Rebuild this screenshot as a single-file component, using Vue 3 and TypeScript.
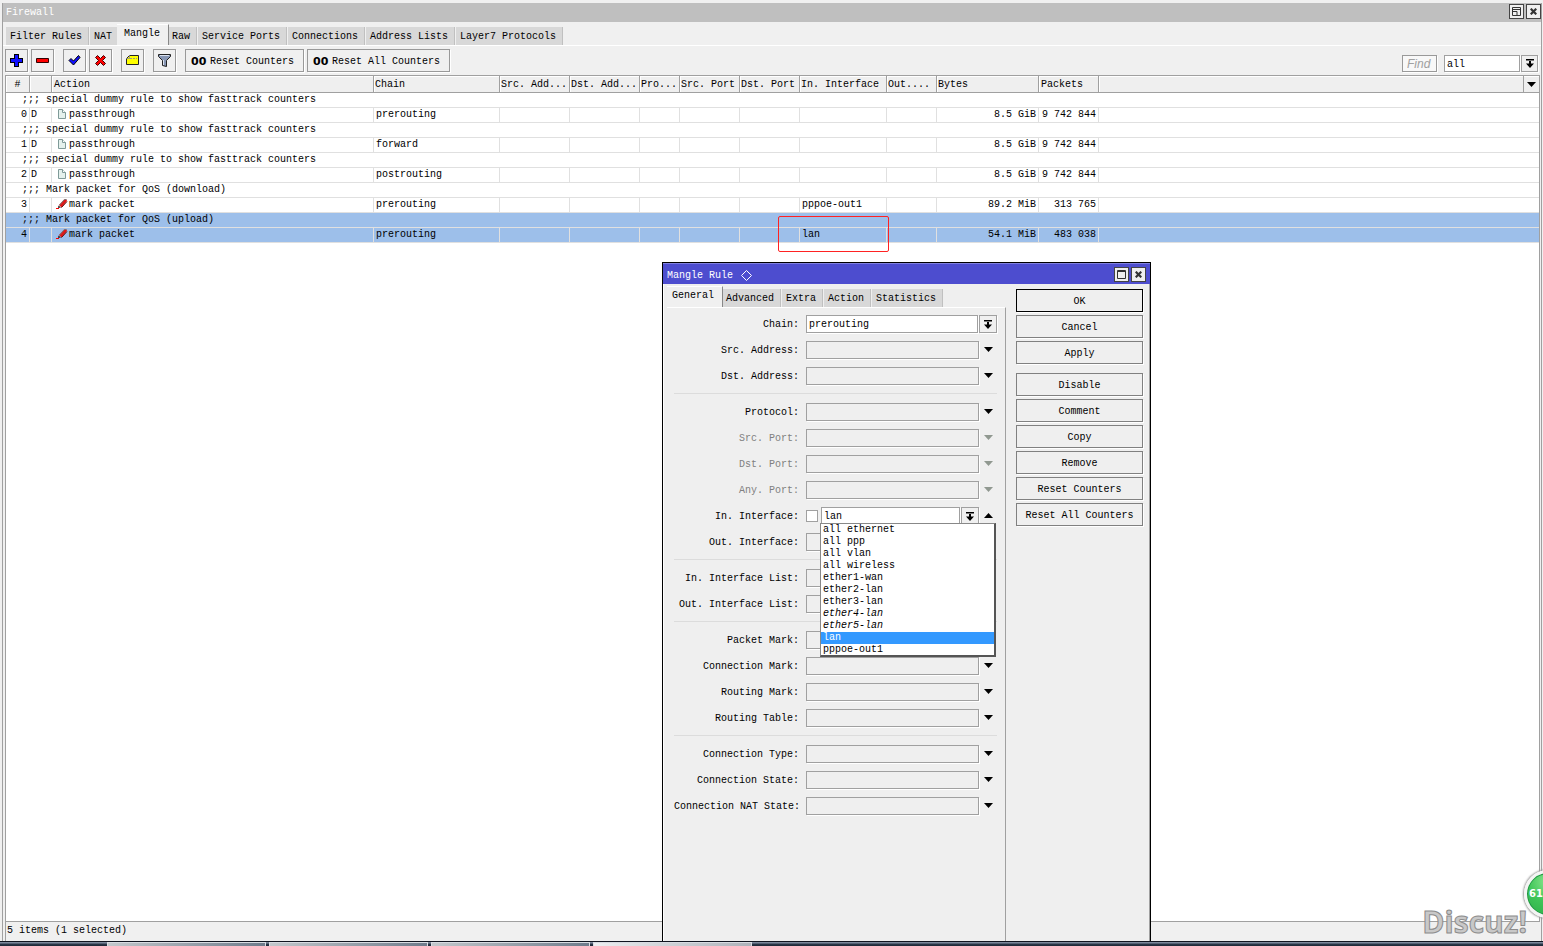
<script setup lang="ts">
import { ref } from 'vue'

interface Rule {
  id: number
  comment: string
  flag: string
  kind: 'pass' | 'mark'
  action: string
  chain: string
  inInterface: string
  bytes: string
  packets: string
}

interface Field {
  label: string
  id: string
  disabled?: boolean
}

const tabs = ['Filter Rules', 'NAT', 'Mangle', 'Raw', 'Service Ports', 'Connections', 'Address Lists', 'Layer7 Protocols']
const activeTab = ref('Mangle')

const dialogTabs = ['General', 'Advanced', 'Extra', 'Action', 'Statistics']
const activeDialogTab = ref('General')

const dummy = 'special dummy rule to show fasttrack counters'
const rules: Rule[] = [
  { id: 0, comment: dummy, flag: 'D', kind: 'pass', action: 'passthrough', chain: 'prerouting', inInterface: '', bytes: '8.5 GiB', packets: '9 742 844' },
  { id: 1, comment: dummy, flag: 'D', kind: 'pass', action: 'passthrough', chain: 'forward', inInterface: '', bytes: '8.5 GiB', packets: '9 742 844' },
  { id: 2, comment: dummy, flag: 'D', kind: 'pass', action: 'passthrough', chain: 'postrouting', inInterface: '', bytes: '8.5 GiB', packets: '9 742 844' },
  { id: 3, comment: 'Mark packet for QoS (download)', flag: '', kind: 'mark', action: 'mark packet', chain: 'prerouting', inInterface: 'pppoe-out1', bytes: '89.2 MiB', packets: '313 765' },
  { id: 4, comment: 'Mark packet for QoS (upload)', flag: '', kind: 'mark', action: 'mark packet', chain: 'prerouting', inInterface: 'lan', bytes: '54.1 MiB', packets: '483 038' },
]
const selected = ref(4)

const columns = [
  { key: 'num', title: '#' },
  { key: 'flag', title: '' },
  { key: 'action', title: 'Action' },
  { key: 'chain', title: 'Chain' },
  { key: 'src', title: 'Src. Add...' },
  { key: 'dst', title: 'Dst. Add...' },
  { key: 'proto', title: 'Pro...' },
  { key: 'sport', title: 'Src. Port' },
  { key: 'dport', title: 'Dst. Port' },
  { key: 'in', title: 'In. Interface' },
  { key: 'out', title: 'Out....' },
  { key: 'bytes', title: 'Bytes' },
  { key: 'packets', title: 'Packets' },
  { key: 'rest', title: '' },
]

const addressFields: Field[] = [
  { label: 'Src. Address', id: 'src-address' },
  { label: 'Dst. Address', id: 'dst-address' },
]
const protocolFields: Field[] = [
  { label: 'Protocol', id: 'protocol' },
  { label: 'Src. Port', id: 'src-port', disabled: true },
  { label: 'Dst. Port', id: 'dst-port', disabled: true },
  { label: 'Any. Port', id: 'any-port', disabled: true },
]
const outField: Field[] = [{ label: 'Out. Interface', id: 'out-interface' }]
const laterGroups: Field[][] = [
  [
    { label: 'In. Interface List', id: 'in-list' },
    { label: 'Out. Interface List', id: 'out-list' },
  ],
  [
    { label: 'Packet Mark', id: 'packet-mark' },
    { label: 'Connection Mark', id: 'connection-mark' },
    { label: 'Routing Mark', id: 'routing-mark' },
    { label: 'Routing Table', id: 'routing-table' },
  ],
  [
    { label: 'Connection Type', id: 'connection-type' },
    { label: 'Connection State', id: 'connection-state' },
    { label: 'Connection NAT State', id: 'connection-nat' },
  ],
]

const interfaces = [
  { name: 'all ethernet' },
  { name: 'all ppp' },
  { name: 'all vlan' },
  { name: 'all wireless' },
  { name: 'ether1-wan' },
  { name: 'ether2-lan' },
  { name: 'ether3-lan' },
  { name: 'ether4-lan', inactive: true },
  { name: 'ether5-lan', inactive: true },
  { name: 'lan' },
  { name: 'pppoe-out1' },
]
const inInterface = ref('lan')
const chain = ref('prerouting')
const filterChain = ref('all')
const find = ref('')

const mainActions = ['OK', 'Cancel', 'Apply']
const moreActions = ['Disable', 'Comment', 'Copy', 'Remove', 'Reset Counters', 'Reset All Counters']
</script>

<template>
  <div class="desktop">
    <main class="firewall">
      <header class="titlebar">
        <h1>Firewall</h1>
        <div class="window-controls">
          <button class="win-btn" aria-label="Restore">
            <svg width="9" height="9" viewBox="0 0 9 9"><path d="M.5.5h8v8h-8zM0 2.5h9M.5 4.5h4.5v4" fill="none" stroke="#333" /></svg>
          </button>
          <button class="win-btn" aria-label="Close">
            <svg width="7" height="7" viewBox="0 0 7 7"><path d="M.7.7l5.600 5.600M6.300.7L.7 6.300" stroke="#333" stroke-width="2.2" /></svg>
          </button>
        </div>
      </header>

      <nav class="tabs main-tabs" role="tablist">
        <button v-for="t in tabs" :key="t" role="tab" class="tab" :class="{ active: t === activeTab }" :aria-selected="t === activeTab" @click="activeTab = t">{{ t }}</button>
      </nav>

      <div class="toolbar">
        <div class="tool-group">
          <button class="tool" aria-label="Add">
            <svg width="13" height="13" viewBox="0 0 13 13"><path d="M4 0h5v4h4v5H9v4H4V9H0V4h4z" fill="#000" /><path d="M5 1h3v4h4v3H8v4H5V8H1V5h4z" fill="#1010ff" /></svg>
          </button>
          <button class="tool" aria-label="Remove">
            <svg width="13" height="13" viewBox="0 0 13 13"><path d="M.5 4.500h12v4H.5z" fill="#f00" stroke="#300" /></svg>
          </button>
        </div>
        <div class="tool-group">
          <button class="tool" aria-label="Enable">
            <svg width="13" height="13" viewBox="0 0 13 13"><path d="M1 6.500L3 4.500l2.500 2.500L10.500 1.500l1.500 2L5.500 11z" fill="#1010ff" stroke="#000" /></svg>
          </button>
          <button class="tool" aria-label="Disable">
            <svg width="13" height="13" viewBox="0 0 13 13"><path d="M1.500 3.500l2-2 3 3 3-3 2 2-3 3 3 3-2 2-3-3-3 3-2-2 3-3z" fill="#f00" stroke="#400" /></svg>
          </button>
        </div>
        <div class="tool-group">
          <button class="tool" aria-label="Comment">
            <svg width="15" height="13" viewBox="0 0 15 13"><path d="M4.500 1.500h9v9h-12v-6z" fill="#ff0" stroke="#222" /><path d="M5 4.500h2M8 4.500h2M11 4.500h1M4.500 1.500v3h-3" stroke="#998" fill="none" /></svg>
          </button>
        </div>
        <div class="tool-group">
          <button class="tool" aria-label="Filter">
            <svg width="13" height="14" viewBox="0 0 13 14"><path d="M.5.500h12v2l-4 4v6l-4-1v-5l-4-4z" fill="#8796b4" stroke="#222" /><path d="M2 1.500h9M5.500 6v5" stroke="#dbe2ee" /></svg>
          </button>
        </div>
        <div class="tool-group">
          <button class="tool wide"><b>00</b>Reset Counters</button>
          <button class="tool wide"><b>00</b>Reset All Counters</button>
        </div>
        <div class="filters">
          <input v-model="find" class="find" type="text" placeholder="Find" aria-label="Find" />
          <span class="combo">
            <select v-model="filterChain" class="box white chain-filter" aria-label="Chain filter">
              <option>all</option>
            </select>
            <span class="drop"><svg width="8" height="9" viewBox="0 0 8 9"><path d="M0 0h8v1.500H0zM3 2h2v2.500h3L4 9 0 4.500h3z" /></svg></span>
          </span>
        </div>
      </div>

      <section class="list">
        <div class="head-menu">
          <button aria-label="Choose columns"><svg width="9" height="5" viewBox="0 0 9 5"><path d="M0 0h9L4.500 5z" /></svg></button>
        </div>
        <table>
          <colgroup>
            <col v-for="c in columns" :key="c.key" :class="'c-' + c.key" />
          </colgroup>
          <thead>
            <tr>
              <th v-for="c in columns" :key="c.key" :class="'h-' + c.key" scope="col">{{ c.title }}</th>
            </tr>
          </thead>
          <tbody v-for="r in rules" :key="r.id" :class="{ selected: r.id === selected }" @click="selected = r.id">
            <tr>
              <td class="comment" colspan="14">;;; {{ r.comment }}</td>
            </tr>
            <tr>
              <td class="right">{{ r.id }}</td>
              <td class="flag">{{ r.flag }}</td>
              <td class="action">
                <svg v-if="r.kind === 'pass'" width="12" height="12" viewBox="0 0 12 12"><path d="M2.500 1.500h4l3 3v6h-7z" fill="#e4f0ec" stroke="#7f9a98" /><path d="M6.500 1.500v3h3" fill="#fff" stroke="#7f9a98" /></svg>
                <svg v-else width="12" height="12" viewBox="0 0 12 12"><path d="M3 7l5-5.500h2.500l.5 1.500L5.500 9.500z" fill="#e01818" /><path d="M3.500 7L8.500 1.500h2" stroke="#777" fill="none" /><path d="M5.500 9.500L11 3.500" stroke="#5a1010" /><path d="M2.500 7.500L5 9.500 2 10z" fill="#222" /><path d="M0 10.500h3" stroke="#f00" /></svg>
                <span>{{ r.action }}</span>
              </td>
              <td>{{ r.chain }}</td>
              <td></td><td></td><td></td><td></td><td></td>
              <td class="marked">{{ r.inInterface }}<i v-if="r.id === 4" class="callout"></i></td>
              <td></td>
              <td class="right">{{ r.bytes }}</td>
              <td class="right">{{ r.packets }}</td>
              <td class="rest"></td>
            </tr>
          </tbody>
        </table>
      </section>

      <footer class="status">5 items (1 selected)</footer>
    </main>

    <div class="taskbar" aria-hidden="true">
      <span class="task"></span><span class="task"></span><span class="task"></span><span class="task current"></span>
    </div>

    <section class="dialog" role="dialog" aria-labelledby="dialog-title">
      <header class="dialog-title">
        <h2 id="dialog-title">Mangle Rule <svg width="11" height="11" viewBox="0 0 11 11"><path d="M5.500.5l5 5-5 5-5-5z" fill="none" stroke="#fff" /></svg></h2>
        <div class="window-controls">
          <button class="win-btn" aria-label="Maximize">
            <svg width="9" height="9" viewBox="0 0 9 9"><path d="M.5.500h8v8h-8zM0 1.500h9" fill="none" stroke="#333" /></svg>
          </button>
          <button class="win-btn" aria-label="Close rule">
            <svg width="7" height="7" viewBox="0 0 7 7"><path d="M.7.7l5.600 5.600M6.300.7L.7 6.300" stroke="#333" stroke-width="2.2" /></svg>
          </button>
        </div>
      </header>
      <div class="dialog-body">
        <div class="form-side">
          <nav class="tabs" role="tablist">
            <button v-for="t in dialogTabs" :key="t" role="tab" class="tab" :class="{ active: t === activeDialogTab }" :aria-selected="t === activeDialogTab" @click="activeDialogTab = t">{{ t }}</button>
          </nav>
          <form class="form" @submit.prevent>
            <div class="row">
              <label for="chain">Chain:</label>
              <span class="combo">
                <select id="chain" v-model="chain" class="box white">
                  <option>prerouting</option>
                  <option>forward</option>
                  <option>postrouting</option>
                </select>
                <span class="drop"><svg width="8" height="9" viewBox="0 0 8 9"><path d="M0 0h8v1.500H0zM3 2h2v2.500h3L4 9 0 4.500h3z" /></svg></span>
              </span>
            </div>
            <div v-for="f in addressFields" :key="f.id" class="row">
              <label :for="f.id">{{ f.label }}:</label>
              <input :id="f.id" class="box" type="text" />
              <button type="button" class="expand" :aria-label="'Expand ' + f.label"><svg width="9" height="5" viewBox="0 0 9 5"><path d="M0 0h9L4.500 5z" /></svg></button>
            </div>
            <hr />
            <div v-for="f in protocolFields" :key="f.id" class="row" :class="{ off: f.disabled }">
              <label :for="f.id">{{ f.label }}:</label>
              <input :id="f.id" class="box" type="text" :disabled="f.disabled" />
              <button type="button" class="expand" :disabled="f.disabled" :aria-label="'Expand ' + f.label"><svg width="9" height="5" viewBox="0 0 9 5"><path d="M0 0h9L4.500 5z" /></svg></button>
            </div>
            <div class="row">
              <label for="in-interface">In. Interface:</label>
              <div class="picker">
                <input class="negate" type="checkbox" aria-label="Negate in. interface" />
                <span class="combo">
                  <input id="in-interface" v-model="inInterface" class="box white" type="text" role="combobox" aria-expanded="true" aria-controls="interface-list" />
                  <button type="button" class="drop" aria-label="Show interfaces"><svg width="8" height="9" viewBox="0 0 8 9"><path d="M0 0h8v1.500H0zM3 2h2v2.500h3L4 9 0 4.500h3z" /></svg></button>
                </span>
                <ul id="interface-list" class="options" role="listbox" aria-label="Interfaces">
                  <li v-for="o in interfaces" :key="o.name" role="option" :class="{ chosen: o.name === inInterface, inactive: o.inactive }" :aria-selected="o.name === inInterface" @click="inInterface = o.name">{{ o.name }}</li>
                </ul>
              </div>
              <button type="button" class="expand" aria-label="Collapse In. Interface"><svg width="9" height="5" viewBox="0 0 9 5"><path d="M0 5h9L4.500 0z" /></svg></button>
            </div>
            <div v-for="f in outField" :key="f.id" class="row">
              <label :for="f.id">{{ f.label }}:</label>
              <input :id="f.id" class="box" type="text" />
              <button type="button" class="expand" :aria-label="'Expand ' + f.label"><svg width="9" height="5" viewBox="0 0 9 5"><path d="M0 0h9L4.500 5z" /></svg></button>
            </div>
            <template v-for="(g, i) in laterGroups" :key="i">
              <hr />
              <div v-for="f in g" :key="f.id" class="row">
                <label :for="f.id">{{ f.label }}:</label>
                <input :id="f.id" class="box" type="text" />
                <button type="button" class="expand" :aria-label="'Expand ' + f.label"><svg width="9" height="5" viewBox="0 0 9 5"><path d="M0 0h9L4.500 5z" /></svg></button>
              </div>
            </template>
          </form>
        </div>
        <div class="actions">
          <div class="action-group">
            <button v-for="a in mainActions" :key="a" class="push" :class="{ primary: a === 'OK' }">{{ a }}</button>
          </div>
          <div class="action-group">
            <button v-for="a in moreActions" :key="a" class="push">{{ a }}</button>
          </div>
        </div>
      </div>
    </section>

    <div class="watermark">Discuz!</div>
    <div class="ball">61</div>
  </div>
</template>

<style>
html,
body {
  margin: 0;
  background: #f0f0f0;
}
</style>

<style scoped>
.desktop,
.desktop * {
  box-sizing: border-box;
}
.desktop {
  position: relative;
  display: flex;
  flex-direction: column;
  min-height: 100vh;
  overflow: hidden;
  background: #f0f0f0;
  color: #000;
  font: 10px/14px "Liberation Mono", monospace;
}
button,
input,
select {
  margin: 0;
  padding: 0;
  border: 0;
  border-radius: 0;
  background: none;
  color: inherit;
  font: inherit;
  appearance: none;
  outline: none;
}
svg {
  display: block;
  flex: none;
}

/* main window */
.firewall {
  flex: 1;
  display: flex;
  flex-direction: column;
  margin: 3px 1px 0 2px;
  border-left: 1px solid #a0a0a0;
  border-right: 1px solid #a0a0a0;
}
.titlebar {
  display: flex;
  justify-content: space-between;
  align-items: center;
  height: 19px;
  padding: 0 0 2px 3px;
  background: #bfbfbf;
}
h1,
h2 {
  margin: 0;
  padding-top: 3px;
  color: #fff;
  font: inherit;
}
.window-controls {
  display: flex;
  gap: 2px;
}
.win-btn {
  display: grid;
  place-items: center;
  width: 15px;
  height: 15px;
  border: 1px solid #444;
  background: #efefef;
}
.tabs {
  display: flex;
  align-items: flex-end;
  height: 23px;
}
.main-tabs {
  padding-left: 3px;
}
.tab {
  height: 18px;
  margin-right: 1px;
  padding: 2px 6px 0 4px;
  border-right: 1px solid #c0c0c0;
  background: #d8d8d8;
  white-space: nowrap;
}
.tab.active {
  position: relative;
  height: 21px;
  margin: 0 0 0 -3px;
  padding: 0 8px 2px 7px;
  border-top: 1px solid #fff;
  border-right: 1px solid #888;
  background: #f0f0f0;
}
.main-tabs .tab.active {
  margin-right: -1px;
}
.toolbar {
  display: flex;
  align-items: center;
  gap: 9px;
  height: 30px;
  padding: 0 3px 0 2px;
  border-top: 1px solid #fff;
}
.tool-group {
  display: flex;
  gap: 3px;
}
.tool {
  display: flex;
  align-items: center;
  justify-content: center;
  width: 23px;
  height: 23px;
  border: 1px solid #999;
  background: #f0f0f0;
  box-shadow: 1px 1px 0 #fff;
  white-space: nowrap;
}
.tool.wide {
  width: auto;
  padding: 2px 9px 0 5px;
}
.tool b {
  width: 19px;
  font: bold 11px/14px "DejaVu Sans", sans-serif;
  text-align: left;
}
.filters {
  display: flex;
  align-items: flex-end;
  gap: 7px;
  height: 23px;
  margin-left: auto;
}
.find {
  width: 35px;
  height: 17px;
  padding: 0 4px;
  border: 1px solid #999;
  background: #f8f8f8;
  box-shadow: 1px 1px 0 #fff;
  font: italic 12px/14px "Liberation Sans", Arial, sans-serif;
}
.find::placeholder {
  color: #a0a0a0;
  opacity: 1;
}
.combo {
  display: flex;
  gap: 1px;
}
.box {
  flex: 1;
  min-width: 0;
  height: 18px;
  padding: 0 2px;
  border: 1px solid #a0a0a0;
  background: #efefef;
  box-shadow: 1px 1px 0 #fff;
}
.box.white {
  background: #fff;
}
select.box {
  padding-top: 2px;
}
.chain-filter {
  flex: none;
  width: 76px;
}
.filters .box,
.filters .drop {
  height: 17px;
}
.drop {
  display: grid;
  flex: none;
  place-items: center;
  width: 17px;
  height: 18px;
  border: 1px solid #a0a0a0;
  background: #f0f0f0;
  box-shadow: 1px 1px 0 #fff;
}

/* rule list */
.list {
  position: relative;
  flex: 1;
  margin: 0 1px 0 2px;
  border: 1px solid #a0a0a0;
  background: #fff;
}
table {
  width: 100%;
  table-layout: fixed;
  border-collapse: separate;
  border-spacing: 0;
}
.c-num { width: 24px; }
.c-flag { width: 22px; }
.c-action { width: 322px; }
.c-chain { width: 126px; }
.c-src,
.c-dst { width: 70px; }
.c-proto { width: 40px; }
.c-sport,
.c-dport { width: 60px; }
.c-in { width: 87px; }
.c-out { width: 50px; }
.c-bytes { width: 102px; }
.c-packets { width: 60px; }
th {
  height: 17px;
  padding: 2px 1px 0;
  border-right: 1px solid #a0a0a0;
  border-bottom: 1px solid #a0a0a0;
  background: #efefef;
  box-shadow: inset 1px 1px 0 #fff;
  font-weight: normal;
  text-align: left;
  white-space: nowrap;
}
th.h-num {
  text-align: center;
}
th.h-action,
th.h-packets {
  padding-left: 2px;
}
th.h-rest {
  border-right: 0;
}
.head-menu {
  position: absolute;
  top: 0;
  right: 0;
}
.head-menu button {
  display: grid;
  place-items: center;
  width: 16px;
  height: 16px;
  border-left: 1px solid #a0a0a0;
}
td {
  position: relative;
  height: 15px;
  padding: 0 2px;
  border-right: 1px solid #e0e0e0;
  border-bottom: 1px solid #e0e0e0;
  line-height: 14px;
  white-space: nowrap;
}
td.comment {
  padding-left: 16px;
  border-right: 0;
}
td.flag {
  padding-left: 1px;
}
td.rest {
  border-right: 0;
}
td.right {
  text-align: right;
}
td.action {
  padding-left: 4px;
}
td.action svg {
  display: inline-block;
  margin-right: 1px;
  vertical-align: top;
}
.selected td {
  background: #9dbfea;
}
.callout {
  position: absolute;
  z-index: 2;
  top: -12px;
  left: -22px;
  width: 111px;
  height: 36px;
  border: 1px solid #f22;
  border-radius: 2px;
}
.status {
  height: 19px;
  margin: 0 0 0 2px;
  padding: 2px 1px;
  border-left: 1px solid #a0a0a0;
}

/* taskbar */
.taskbar {
  display: flex;
  gap: 3px;
  height: 5px;
  padding-left: 107px;
  border-top: 1px solid #10141f;
  background: linear-gradient(#7d899c 0 1px, #2c394b 2px, #1d2836);
}
.task {
  width: 159px;
  border: 1px solid #d8dce2;
  border-bottom: 0;
  background: linear-gradient(90deg, #c3c8cc, #6f7c8c);
}
.task.current {
  background: linear-gradient(90deg, #eceef0, #adb2ba);
}

/* rule dialog */
.dialog {
  position: absolute;
  z-index: 3;
  top: 262px;
  bottom: 5px;
  left: 662px;
  display: flex;
  flex-direction: column;
  width: 489px;
  border: 1px solid #000;
  border-bottom: 0;
  background: #efefef;
}
.dialog-title {
  display: flex;
  justify-content: space-between;
  align-items: center;
  height: 21px;
  padding: 0 4px;
  border-top: 1px solid #8080e0;
  background: #4d4dcf;
}
h2 {
  display: flex;
  align-items: center;
  gap: 8px;
}
.dialog-body {
  flex: 1;
  display: flex;
  padding: 0 6px 0 3px;
  border-left: 1px solid #fff;
  border-right: 1px solid #a0a0a0;
}
.form-side {
  flex: 1;
  display: flex;
  flex-direction: column;
  min-width: 0;
}
.dialog .tab.active {
  margin: 0 -1px 0 0;
  padding: 0 8px 2px 5px;
}
.form {
  flex: 1;
  padding: 3px 8px 0 7px;
  border-top: 1px solid #fff;
  border-right: 1px solid #a0a0a0;
}
.row {
  display: grid;
  grid-template-columns: 125px 173px 11px;
  column-gap: 7px;
  align-items: center;
  height: 26px;
}
.row label {
  padding-top: 2px;
  text-align: right;
  white-space: nowrap;
}
.row > .box {
  width: 173px;
}
.row > .combo {
  grid-column: 2 / 4;
  width: 191px;
}
.row .drop {
  width: 18px;
}
.row .expand {
  display: grid;
  place-items: center;
  width: 9px;
  height: 9px;
  margin: -2px 0 0 -2px;
}
.off label {
  color: #808080;
}
.off path {
  fill: #909890;
}
hr {
  height: 10px;
  margin: 0;
  border: 0;
  background: linear-gradient(#dcdcdc, #dcdcdc) 0 4px / 100% 1px no-repeat;
}
.picker {
  position: relative;
  display: flex;
  align-items: center;
  gap: 3px;
}
.picker .combo {
  flex: 1;
}
.negate {
  width: 12px;
  height: 12px;
  border: 1px solid #a0a0a0;
  background: #fff;
}
.options {
  position: absolute;
  z-index: 4;
  top: 16px;
  left: 14px;
  width: 176px;
  height: 134px;
  margin: 0;
  padding: 0;
  overflow: hidden;
  border: 1px solid #888;
  border-right: 2px solid #555;
  border-bottom: 2px solid #555;
  background: #fff;
  list-style: none;
}
.options li {
  height: 12px;
  padding-left: 2px;
  line-height: 12px;
}
.options .inactive {
  font-style: italic;
}
.options .chosen {
  background: #3399ff;
  color: #fff;
}
.actions {
  flex: none;
  display: flex;
  flex-direction: column;
  gap: 9px;
  width: 137px;
  padding: 5px 0 0 10px;
}
.action-group {
  display: flex;
  flex-direction: column;
  gap: 3px;
}
.push {
  height: 23px;
  padding-top: 2px;
  border: 1px solid #808080;
  background: #efefef;
  box-shadow: 1px 1px 0 #fff;
}
.push.primary {
  border-color: #000;
}

/* overlays */
.watermark {
  position: absolute;
  z-index: 5;
  right: 16px;
  bottom: 4px;
  color: #c8c8c8;
  font: bold 30px/40px "Open Sans", "Noto Sans", sans-serif;
  -webkit-text-stroke: 1px #8c8c8c;
}
.ball {
  position: absolute;
  z-index: 6;
  right: -29px;
  bottom: 28px;
  width: 48px;
  height: 48px;
  padding-left: 2px;
  border: 3px solid #f4f4f4;
  border-radius: 50%;
  background: radial-gradient(circle at 50% 20%, #8be68f, #3fc558 50%, #2fae4a);
  box-shadow: 0 0 2px 1px #999, inset 0 0 0 1px #1f9444;
  color: #fff;
  font: bold 10px/42px "DejaVu Sans", sans-serif;
}
</style>
